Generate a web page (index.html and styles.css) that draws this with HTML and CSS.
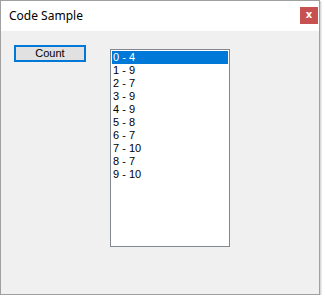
FILE: index.html
```html
<!DOCTYPE html>
<html>
<head>
<meta charset="utf-8">
<link rel="stylesheet" href="styles.css">
</head>
<body>
<div class="window">
  <div class="titlebar">
    <span class="title">Code Sample</span>
    <span class="close">x</span>
  </div>
  <div class="client">
    <button class="btn">Count</button>
    <ul class="listbox">
      <li class="sel">0 - 4</li>
      <li>1 - 9</li>
      <li>2 - 7</li>
      <li>3 - 9</li>
      <li>4 - 9</li>
      <li>5 - 8</li>
      <li>6 - 7</li>
      <li>7 - 10</li>
      <li>8 - 7</li>
      <li>9 - 10</li>
    </ul>
  </div>
</div>
</body>
</html>
```
FILE: styles.css
```css
html, body {
  margin: 0;
  padding: 0;
  background: #ffffff;
}
.window {
  width: 318px;
  height: 293px;
  border: 1px solid #a0a0a0;
  background: #f0f0f0;
  box-shadow: 1px 1px 0 #d8d8d8, 2px 2px 0 #ececec;
  display: flex;
  flex-direction: column;
}
.titlebar {
  height: 30px;
  background: #ffffff;
  display: flex;
  align-items: center;
  justify-content: space-between;
  padding: 0 1px 0 8px;
}
.title {
  font-family: "Noto Sans", "Open Sans", sans-serif;
  font-size: 12px;
  color: #000000;
  margin-top: -2px;
}
.close {
  width: 18px;
  height: 17px;
  background: #c75050;
  color: #ffffff;
  font-family: "DejaVu Sans", sans-serif;
  font-weight: bold;
  font-size: 10px;
  line-height: 15px;
  text-align: center;
  margin-top: -2px;
}
.client {
  flex: 1;
  display: flex;
  align-items: flex-start;
  padding: 14px 0 0 13px;
}
.btn {
  width: 72px;
  height: 17px;
  margin: 0;
  padding: 0;
  border: 2px solid #0078d7;
  background: #e1e1e1;
  font-family: "Liberation Sans", Arial, sans-serif;
  font-size: 11px;
  color: #000000;
  line-height: 13px;
}
.listbox {
  list-style: none;
  margin: 4px 0 0 24px;
  padding: 1px;
  width: 116px;
  height: 194px;
  border: 1px solid #828790;
  background: #ffffff;
  font-family: "Liberation Sans", Arial, sans-serif;
  font-size: 11px;
  color: #000000;
}
.listbox li {
  height: 13px;
  line-height: 13px;
  padding-left: 1px;
}
.listbox li.sel {
  background: #0078d7;
  color: #ffffff;
}
```
